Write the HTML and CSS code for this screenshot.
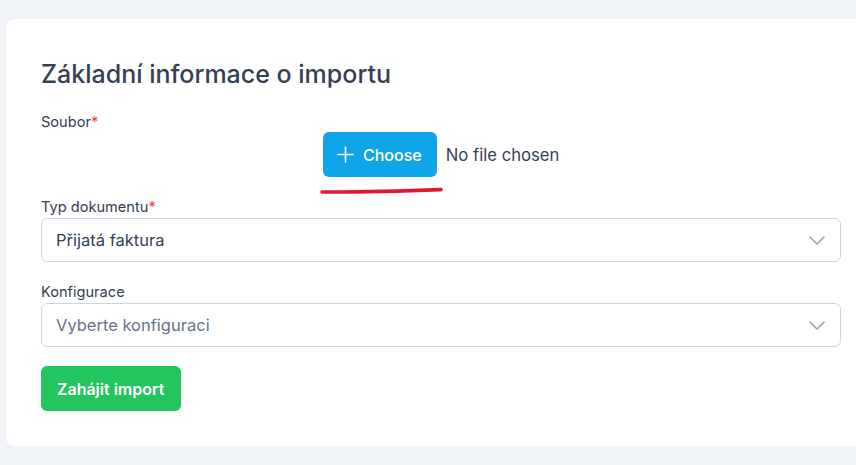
FILE: index.html
```html
<!DOCTYPE html>
<html lang="cs">
<head>
    <meta charset="UTF-8">
    <meta name="viewport" content="width=device-width, initial-scale=1.0">
    <title>Import</title>
    <link rel="stylesheet" href="styles.css">
</head>
<body>
    <div class="card">
        <h1>Základní informace o importu</h1>

        <div class="form-group">
            <label class="required">Soubor</label>
            <div class="file-row">
                <div class="file-pick">
                    <button type="button" class="btn-choose">
                        <svg width="17" height="17" viewBox="0 0 17 17" fill="none" stroke="#fff" stroke-width="1.6" stroke-linecap="round">
                            <path d="M8.5 1v15M1 8.5h15"/>
                        </svg>
                        Choose
                    </button>
                    <!-- hand-drawn red mark under the button -->
                    <svg class="underline" width="124" height="9" viewBox="0 0 124 9" fill="none">
                        <path d="M2 6 C 40 6.2, 80 5.2, 121 3.6" stroke="#e3172e" stroke-width="3.6" stroke-linecap="round"/>
                    </svg>
                </div>
                <span class="file-name">No file chosen</span>
            </div>
        </div>

        <div class="form-group">
            <label class="required">Typ dokumentu</label>
            <div class="select">
                <span>Přijatá faktura</span>
                <svg width="16" height="9" viewBox="0 0 16 9" fill="none" stroke="#94a3b8" stroke-width="1.6" stroke-linecap="round" stroke-linejoin="round">
                    <path d="M1 1l7 7 7-7"/>
                </svg>
            </div>
        </div>

        <div class="form-group last">
            <label>Konfigurace</label>
            <div class="select">
                <span class="placeholder">Vyberte konfiguraci</span>
                <svg width="16" height="9" viewBox="0 0 16 9" fill="none" stroke="#94a3b8" stroke-width="1.6" stroke-linecap="round" stroke-linejoin="round">
                    <path d="M1 1l7 7 7-7"/>
                </svg>
            </div>
        </div>

        <button type="button" class="btn-submit">Zahájit import</button>
    </div>
</body>
</html>
```

FILE: styles.css
```css
body {
    margin: 0;
    padding: 19px 0 0 6px;
    background-color: #f0f3f8;
    font-family: 'Inter', 'Noto Sans', sans-serif;
    color: #334155;
    overflow: hidden;
}

.card {
    width: 870px;
    box-sizing: border-box;
    background-color: white;
    border-radius: 8px;
    padding: 40px 35px 35px 35px;
}

h1 {
    margin: 0 0 25px 0;
    font-size: 25px;
    font-weight: 500;
    color: #334155;
}

.form-group {
    margin-bottom: 22px;
}

.form-group.last {
    margin-bottom: 19px;
}

label {
    display: block;
    font-size: 14.6px;
    line-height: 17px;
    color: #334155;
    margin-bottom: 2px;
}

.required::after {
    content: "*";
    color: #ef4444;
}

.file-row {
    display: flex;
    align-items: center;
    margin-left: 282px;
    margin-top: -1px;
}

.file-pick {
    position: relative;
}

.btn-choose {
    display: flex;
    align-items: center;
    gap: 9px;
    height: 45px;
    padding: 0 15px 0 14px;
    border: none;
    border-radius: 6px;
    background-color: #10a5e9;
    color: white;
    font-family: inherit;
    font-size: 16px;
    font-weight: 500;
}

.underline {
    position: absolute;
    left: -3px;
    top: 54px;
}

.file-name {
    font-size: 16.7px;
    color: #334155;
    margin-left: 9px;
}

.select {
    display: flex;
    align-items: center;
    justify-content: space-between;
    height: 44px;
    box-sizing: border-box;
    border: 1px solid #cbd5e1;
    border-radius: 6px;
    padding: 0 15px 0 14px;
    font-size: 16.5px;
    color: #334155;
}

.placeholder {
    color: #64748b;
}

.btn-submit {
    height: 45px;
    padding: 0 17px 0 16px;
    border: none;
    border-radius: 6px;
    background-color: #22c55e;
    color: white;
    font-family: inherit;
    font-size: 16px;
    font-weight: 600;
}
```
